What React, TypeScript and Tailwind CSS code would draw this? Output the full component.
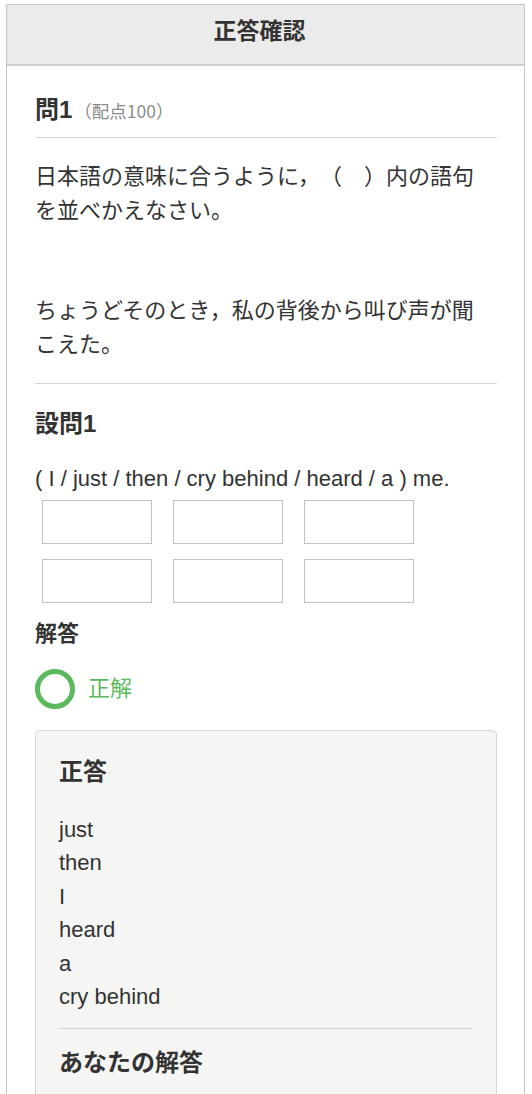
const font = {
  fontFamily: '"Liberation Sans", "Noto Sans CJK JP", sans-serif',
};

const jpFont = {
  fontFamily: '"Noto Sans CJK JP", "Liberation Sans", sans-serif',
};

const correctOrder = ["just", "then", "I", "heard", "a", "cry behind"];

function AnswerBox() {
  return <div className="h-[44px] w-[110px] border border-[#c2c2c2] bg-white" />;
}

export default function App() {
  return (
    <div className="min-h-screen bg-white text-[#333] [text-spacing-trim:space-all]" style={font}>
      <div className="ml-[6px] mt-[4px] w-[519px] border-x border-t border-[#c4c4c4]">
        <div className="h-[61px] border-b-2 border-[#cfcfcf] bg-[#ebebeb] pr-[12px] pt-[9px] text-center text-[23px] font-bold leading-[34px]">
          正答確認
        </div>

        <div className="pl-[28px] pr-[27px] text-[22px] leading-[34px]">
          <div className="mt-[27px] flex items-baseline border-b border-[#d4d4d4] pb-[9px]">
            <span className="text-[24px] font-bold">問1</span>
            <span className="ml-[2px] text-[17.5px] text-[#8a8a8a]" style={jpFont}>
              （配点100）
            </span>
          </div>

          <div className="border-b border-[#d4d4d4] pb-[24px] pt-[19px]" style={jpFont}>
            <p>
              日本語の意味に合うように，（　）内の語句
              <br />
              を並べかえなさい。
            </p>
            <p className="mt-[66px]">
              ちょうどそのとき，私の背後から叫び声が聞
              <br />
              こえた。
            </p>
          </div>

          <h3 className="mt-[23px] text-[24px] font-bold">設問1</h3>
          <p className="mt-[21px]">( I / just / then / cry behind / heard / a ) me.</p>
          <div className="ml-[7px] mt-[4px] grid w-[372px] grid-cols-3 gap-x-[21px] gap-y-[15px]">
            {Array.from({ length: 6 }).map((_, i) => (
              <AnswerBox key={i} />
            ))}
          </div>

          <h3 className="mt-[14px] font-bold">解答</h3>
          <div className="mt-[18px] flex items-center gap-[13px]">
            <div className="h-[40px] w-[40px] rounded-full border-[5px] border-[#5cb85c]" />
            <span className="text-[#5cb85c]">正解</span>
          </div>

          <div className="mt-[21px] rounded-[5px] border border-[#d6d6d6] bg-[#f5f6f4] pl-[23px] pr-[23px] pt-[24px]">
            <h4 className="text-[24px] font-bold">正答</h4>
            <ul className="mt-[24px] leading-[33.4px]">
              {correctOrder.map((w) => (
                <li key={w}>{w}</li>
              ))}
            </ul>
            <div className="mt-[15px] border-t border-[#d4d4d4]" />
            <h4 className="mt-[17px] pb-[40px] text-[24px] font-bold">あなたの解答</h4>
          </div>
        </div>
      </div>
    </div>
  );
}
